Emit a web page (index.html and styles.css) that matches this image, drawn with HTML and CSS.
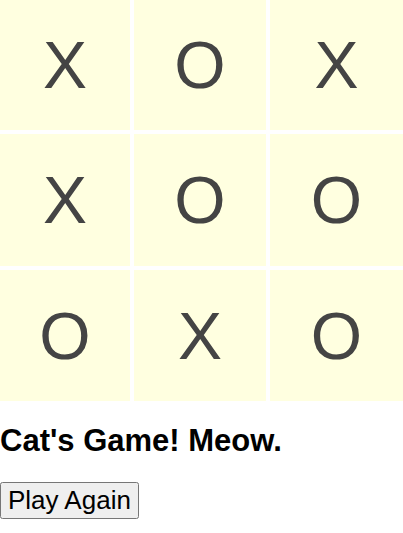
FILE: index.html
```html
<!DOCTYPE html>
<html>
<head>
<meta charset="utf-8">
<link rel="stylesheet" href="styles.css">
</head>
<body>
<div class="board">
  <div class="cell">X</div>
  <div class="cell">O</div>
  <div class="cell">X</div>
  <div class="cell">X</div>
  <div class="cell">O</div>
  <div class="cell">O</div>
  <div class="cell">O</div>
  <div class="cell">X</div>
  <div class="cell">O</div>
</div>
<h1 class="status">Cat's Game! Meow.</h1>
<button class="again">Play Again</button>
</body>
</html>
```
FILE: styles.css
```css
body {
  margin: 0;
  font-family: "Liberation Sans", Arial, sans-serif;
  background: #fff;
}
.board {
  display: grid;
  grid-template-columns: 130px 132px 133px;
  grid-template-rows: 130px 132px 131px;
  gap: 4px;
}
.cell {
  background: #ffffe0;
  color: #444;
  font-size: 66px;
  display: flex;
  align-items: center;
  justify-content: center;
}
.status {
  font-size: 31px;
  font-weight: bold;
  margin: 22px 0 23px;
  color: #000;
}
.again {
  font-family: "Liberation Sans", Arial, sans-serif;
  font-size: 26px;
  margin: 0;
}
```
